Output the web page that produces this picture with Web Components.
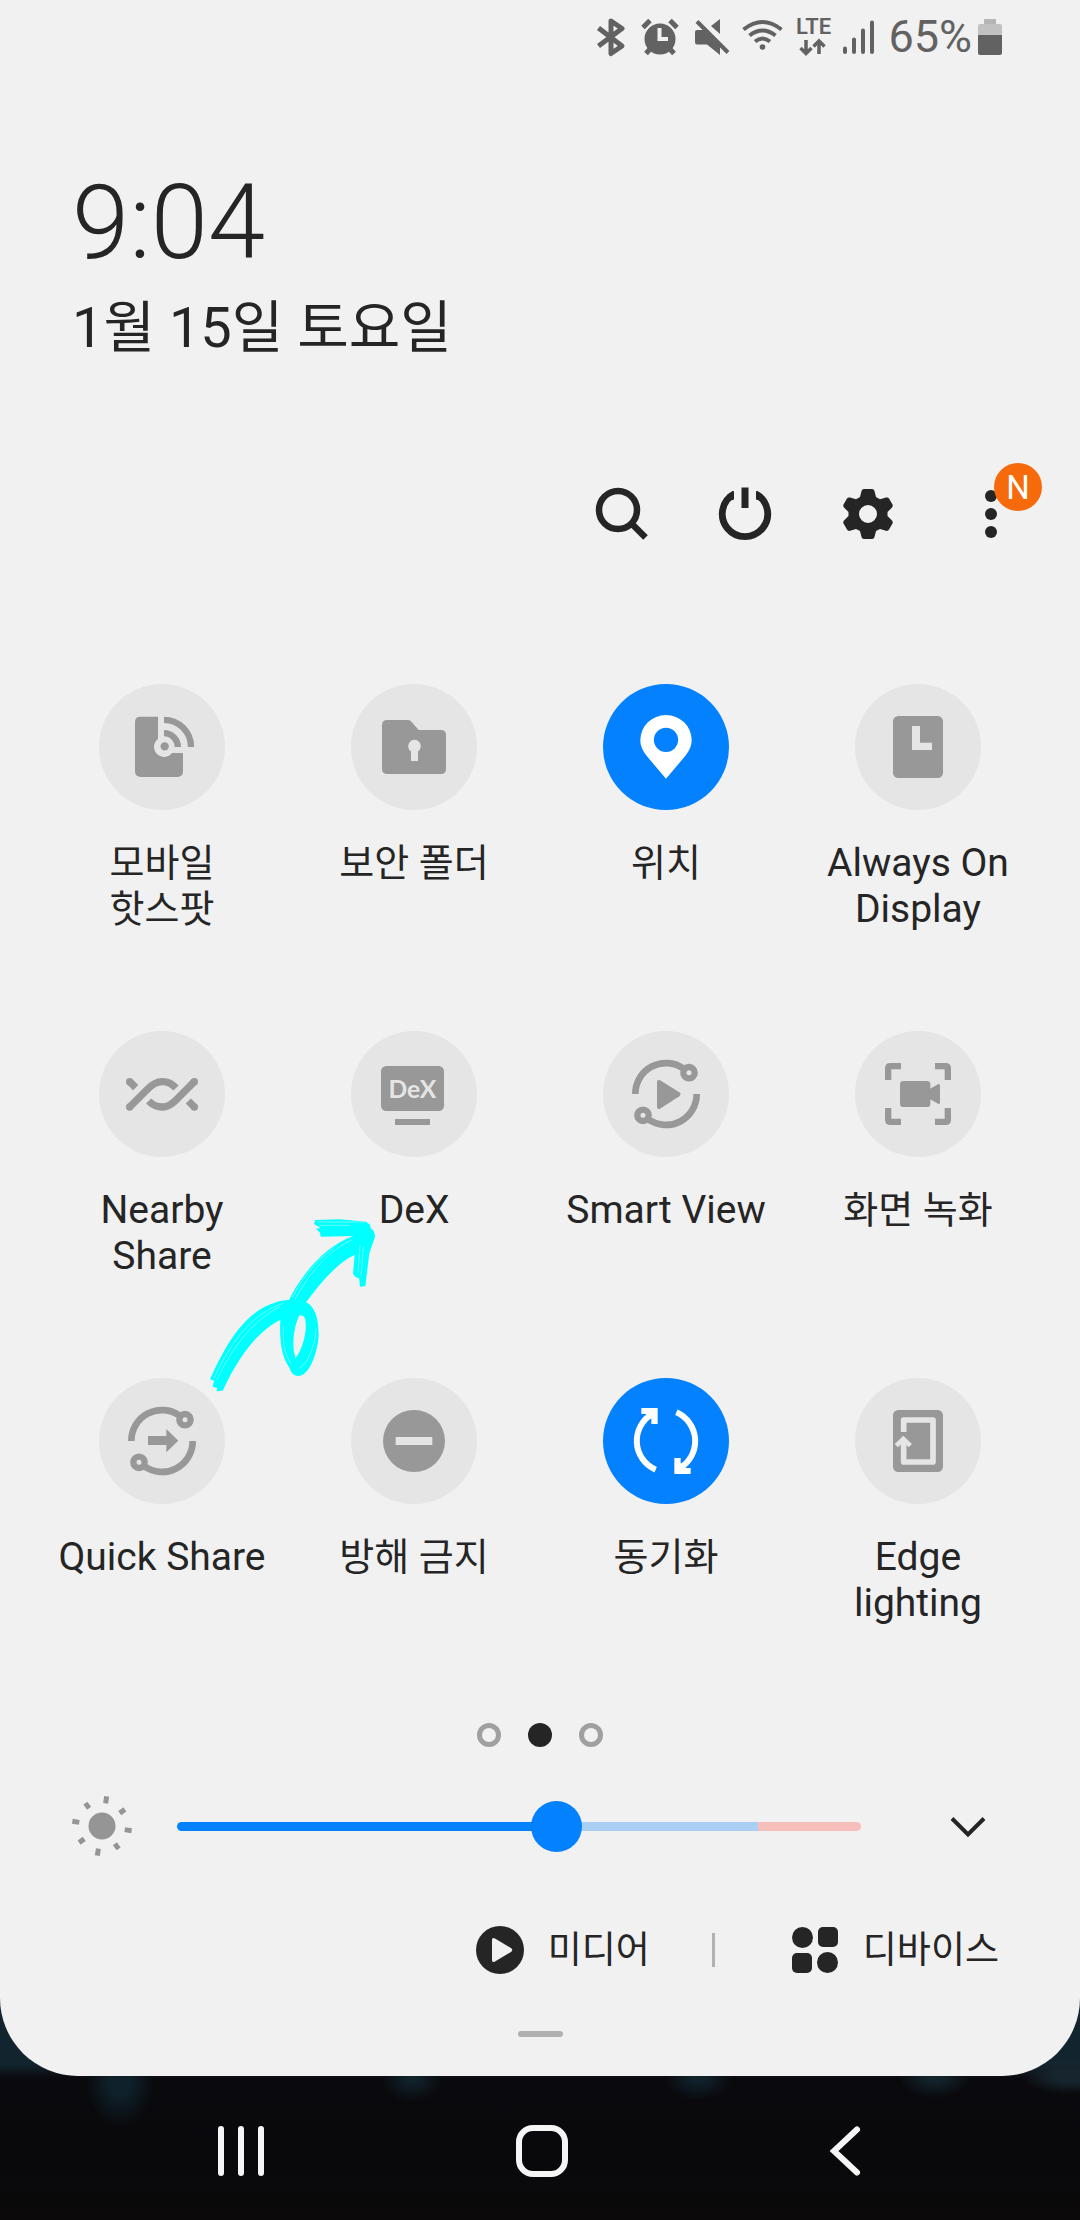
<!DOCTYPE html>
<html lang="ko">
<head>
<meta charset="utf-8">
<meta name="viewport" content="width=device-width, initial-scale=1">
<title>Quick settings</title>
<style>
  body { margin: 0; background: #0a0a0e; color: #252525; font-family: Roboto, "Noto Sans CJK KR", sans-serif; }
</style>
</head>
<body>
<quick-panel>
  <status-bar slot="status"></status-bar>
  <panel-clock slot="clock" time="9:04">1월 15일 토요일</panel-clock>
  <panel-toolbar slot="toolbar"></panel-toolbar>
  <tile-grid slot="tiles">
    <quick-tile icon="hotspot">모바일 핫스팟</quick-tile>
    <quick-tile icon="folder">보안 폴더</quick-tile>
    <quick-tile icon="pin" active>위치</quick-tile>
    <quick-tile icon="aod" lang="en">Always On Display</quick-tile>
    <quick-tile icon="nearby" lang="en">Nearby Share</quick-tile>
    <quick-tile icon="dex" lang="en">DeX</quick-tile>
    <quick-tile icon="smartview" lang="en">Smart View</quick-tile>
    <quick-tile icon="record">화면 녹화</quick-tile>
    <quick-tile icon="quickshare" lang="en">Quick Share</quick-tile>
    <quick-tile icon="dnd">방해 금지</quick-tile>
    <quick-tile icon="sync" active>동기화</quick-tile>
    <quick-tile icon="edge" lang="en">Edge lighting</quick-tile>
  </tile-grid>
  <page-dots slot="dots"></page-dots>
  <brightness-row slot="brightness"></brightness-row>
  <media-row slot="media"></media-row>
  <nav-bar slot="nav"></nav-bar>
</quick-panel>

<script>
// Each entry: [width, height, viewBox, content]. Shapes use currentColor; --cut is the colour of cut-outs.
const ring = '<g fill="none" stroke="currentColor"><path stroke-width="20" d="M97 189A92 92 0 0 1 242 113M281 189A92 92 0 0 1 136 265"/><circle cx="258" cy="125" r="17" stroke-width="19"/><circle cx="120" cy="253" r="17" stroke-width="19"/></g>';
const syncHalf = '<path fill="none" stroke="currentColor" stroke-width="18" d="M158 275A94 94 0 0 1 149 107"/><path fill="currentColor" d="M115 90H164V138H145V122L132 116L130 108H115Z"/>';
const tile = body => [126, 126, '0 0 378 378', body];
const ICONS = {
  bluetooth: [32, 38, '0 0 32 38', '<path fill="none" stroke="currentColor" stroke-width="5" stroke-linejoin="round" d="M1.500 10L25 28L14 35.500V3L25 10.500L1.500 28"/>'],
  alarm: [41, 38, '0 0 41 38', '<circle cx="19" cy="21" r="15.500" fill="currentColor"/><path stroke="currentColor" stroke-width="5" d="M2 9.500L9 2.500M29 2.500L36 9.500M10 30L5 35.500M28 30L33 35.500"/><path stroke="#f1f1f1" stroke-width="4" fill="none" d="M18.500 10V21H27"/>'],
  mute: [36, 38, '0 0 36 38', '<path fill="currentColor" d="M3 12H10L26 28V37L13 26.500H3Q1 26.500 1 24V14Q1 12 3 12ZM17 8L26 1V16Z"/><path stroke="currentColor" stroke-width="4" d="M3 3.500L34 34.500"/>'],
  wifi: [42, 38, '0 0 42 38', '<g fill="none" stroke="currentColor" stroke-width="4"><path d="M1.500 11.500Q20.500-3.500 39.500 11.500M7.500 17.500Q20.500 7.500 33.500 17.500M13 23.500Q20.500 17.500 28 23.500"/></g><circle cx="20.500" cy="29" r="2.800" fill="currentColor"/>'],
  lte: [34, 40, '0 0 34 40', '<text x="0" y="17" font-family="Roboto, sans-serif" font-weight="600" font-size="22" fill="currentColor">LTE</text><path fill="none" stroke="currentColor" stroke-width="3.500" d="M10 23V36M4.500 31L10 36.500L15.500 31M23 37V25M17.500 29.500L23 24L28.500 29.500"/>'],
  signal: [34, 38, '0 0 34 38', '<path stroke="currentColor" stroke-width="4" stroke-linecap="round" d="M3 30.500V34M12 21.500V34M21 12.500V34M30 4.500V34"/>'],
  battery: [24, 38, '0 0 24 38', '<path fill="#b5b5b5" d="M6 2Q6 1 7 1H17Q18 1 18 2V6H6Z"/><path fill="#c1c1c1" d="M2 6H22Q24 6 24 8V17H0V8Q0 6 2 6Z"/><path fill="currentColor" d="M0 17H24V35Q24 37 22 37H2Q0 37 0 35Z"/>'],
  search: [60, 60, '0 0 60 60', '<g fill="none" stroke="currentColor" stroke-width="6.500"><circle cx="26" cy="26" r="19"/><path d="M39 39L53.500 53.500"/></g>'],
  power: [60, 60, '0 0 60 60', '<path fill="none" stroke="currentColor" stroke-width="6.800" d="M19.500 9.800A22.700 22.700 0 1 0 40.500 9.800"/><path fill="#f1f1f1" d="M19 3H41V14H19Z"/><path fill="currentColor" d="M26.500 3.500H33.500V24H26.500ZM19 7V15.500L14 17L12 11ZM41 7V15.500L46 17L48 11Z"/>'],
  gear: [60, 60, '0 0 60 60', '<path fill="currentColor" fill-rule="evenodd" d="M26 5H34Q36 5 36.500 7L38 13L42 15.200L48 13.500Q50 13 51 14.500L54.500 20.500Q55.200 22 54 23.500L49.500 28V32L54 36.500Q55.200 38 54.500 39.500L51 45.500Q50 47.200 48 46.800L42 45L38 47L36.500 53Q36 55 34 55H26Q24 55 23.500 53L22 47L18 45L12 46.800Q10 47.200 9 45.500L5.500 39.500Q4.800 38 6 36.500L10.500 32V28L6 23.500Q4.800 22 5.500 20.500L9 14.500Q10 13 12 13.500L18 15.200L22 13L23.500 7Q24 5 26 5ZM30 21A9 9 0 1 0 30 39A9 9 0 1 0 30 21Z"/>'],
  more: [60, 60, '0 0 60 60', '<g fill="currentColor"><circle cx="30" cy="12" r="6"/><circle cx="30" cy="30" r="6"/><circle cx="30" cy="48" r="6"/></g>'],
  hotspot: tile('<path fill="currentColor" d="M124 98H177V165A30 30 0 1 0 219 207H252V262Q252 279 235 279H126Q108 279 108 262V114Q108 98 124 98Z"/><circle cx="197" cy="187" r="12.500" fill="currentColor"/><path fill="none" stroke="currentColor" stroke-width="19" d="M195 147.500A41.500 41.500 0 0 1 236.500 189M195 107.500A81 81 0 0 1 276 189"/>'),
  folder: tile('<path fill="currentColor" d="M109 108H170Q176 108 180 112L203 138H270Q285 138 285 153V254Q285 270 270 270H109Q93 270 93 254V124Q93 108 109 108Z"/><path fill="var(--cut)" d="M180 202A19 19 0 1 1 201 202V231H180Z"/>'),
  pin: tile('<path fill="currentColor" fill-rule="evenodd" d="M189 284L132 217C119 200 112 186 112 168A77 75 0 0 1 266 168C266 186 259 200 246 217ZM189 131A36 36 0 1 0 189 204A36 36 0 1 0 189 131Z"/>'),
  aod: tile('<rect x="114" y="96" width="150" height="186" rx="16" fill="currentColor"/><path fill="var(--cut)" d="M171 126H195V176H231V198H171Z"/>'),
  nearby: tile('<g fill="none" stroke="currentColor" stroke-width="22"><path d="M92 228L143 177Q166 152 190 152Q213 152 231 171M286 152L235 203Q212 228 190 228Q167 228 149 210M92 152L110 170M286 228L268 210"/></g><g fill="currentColor"><circle cx="92" cy="152" r="11"/><circle cx="92" cy="228" r="11"/><circle cx="286" cy="152" r="11"/><circle cx="286" cy="228" r="11"/></g>'),
  dex: tile('<rect x="90" y="105" width="189" height="135" rx="16" fill="currentColor"/><path fill="currentColor" d="M132 264H237V282H132Z"/><text x="184" y="201" text-anchor="middle" font-family="Lato, sans-serif" font-weight="700" font-size="74" fill="var(--cut)">DeX</text>'),
  smartview: tile(ring + '<path fill="currentColor" d="M162 154Q162 144 171 148L229 184Q236 190 229 196L171 233Q162 237 162 227Z"/>'),
  record: tile('<path fill="none" stroke="currentColor" stroke-width="19" d="M138 105.500H106Q99.500 105.500 99.500 112V147M240 105.500H272Q278.500 105.500 278.500 112V147M138 272.500H106Q99.500 272.500 99.500 266V231M240 272.500H272Q278.500 272.500 278.500 266V231"/><rect x="135" y="150" width="91" height="78" rx="10" fill="currentColor"/><path fill="currentColor" d="M224 174L249 160Q255 157 255 164V214Q255 221 249 218L224 204Z"/>'),
  quickshare: tile(ring + '<path fill="currentColor" d="M147 174H202V153L238 188L202 223V201H147Z"/>'),
  dnd: tile('<circle cx="189" cy="189" r="93" fill="currentColor"/><path fill="var(--cut)" d="M134 177H244V201H134Z"/>'),
  sync: tile(`<g>${syncHalf}</g><g transform="rotate(180 189 189)">${syncHalf}</g>`),
  edge: tile('<rect x="114" y="96" width="150" height="186" rx="16" fill="currentColor"/><g fill="none" stroke="var(--cut)"><path stroke-width="17" stroke-linejoin="round" d="M146 162V126H234V252H146V188"/><path stroke-width="14" d="M124 203L145 183L166 203"/></g>'),
  sun: [60, 60, '0 0 60 60', '<circle cx="30" cy="30" r="13.500" fill="currentColor"/><g stroke="currentColor" stroke-width="5" transform="rotate(9 30 30)"><path d="M30 0V7M30 53V60M0 30H7M53 30H60M10 10L14.500 14.500M45.500 45.500L50 50M50 10L45.500 14.500M14.500 45.500L10 50"/></g>'],
  chevron: [40, 40, '0 0 40 40', '<path fill="none" stroke="currentColor" stroke-width="4" d="M4 12.500L20 28.500L36 12.500"/>'],
  play: [48, 48, '0 0 48 48', '<circle cx="24" cy="24" r="24" fill="currentColor"/><path fill="#f1f1f1" d="M16 14Q16 11 19 12.500L35 22Q37.500 24 35 26L19 35.500Q16 37 16 34Z"/>'],
  devices: [48, 48, '0 0 48 48', '<g fill="currentColor"><circle cx="11.500" cy="11.500" r="10.500"/><rect x="27" y="1" width="20" height="20" rx="5"/><rect x="1" y="27" width="20" height="20" rx="5"/><circle cx="36.500" cy="36.500" r="10.500"/></g>'],
  recents: [60, 60, '0 0 60 60', '<path stroke="currentColor" stroke-width="6" stroke-linecap="round" d="M10 8V52M30 8V52M50 8V52"/>'],
  home: [60, 60, '0 0 60 60', '<rect x="7" y="7" width="46" height="46" rx="14" fill="none" stroke="currentColor" stroke-width="6"/>'],
  back: [60, 60, '0 0 60 60', '<path fill="none" stroke="currentColor" stroke-width="6" stroke-linecap="round" stroke-linejoin="miter" d="M44 8.500L21 30L44 51.500"/>']
};

const define = (name, css, html) => customElements.define(name, class extends HTMLElement {
  constructor() {
    super();
    this.attachShadow({ mode: 'open' });
  }
  connectedCallback() {
    const markup = typeof html === 'function' ? html(this) : html;
    this.shadowRoot.innerHTML = `<style>*{box-sizing:border-box}button{font:inherit;color:inherit;background:none;border:0;padding:0;margin:0}${css}</style>${markup}`;
  }
});

define('qs-icon', ':host{display:inline-block;flex:none}svg{display:block;overflow:visible}', el => {
  const [w, h, box, body] = ICONS[el.getAttribute('name')];
  return `<svg width="${w}" height="${h}" viewBox="${box}" aria-hidden="true">${body}</svg>`;
});

define('status-bar', `
  :host{display:flex;justify-content:flex-end;align-items:center;gap:12px;height:73px;padding:0 78px;color:#626262}
  .level{display:flex;align-items:center;gap:6px;font-size:45px;line-height:54px}`,
  `<qs-icon name="bluetooth"></qs-icon><qs-icon name="alarm"></qs-icon><qs-icon name="mute"></qs-icon>
   <qs-icon name="wifi"></qs-icon><qs-icon name="lte"></qs-icon><qs-icon name="signal"></qs-icon>
   <div class="level"><span>65%</span><qs-icon name="battery"></qs-icon></div>`);

define('panel-clock', `
  :host{display:block;padding:90px 72px 0}
  .time{font-size:103px;line-height:120px;font-weight:300}
  .date{margin-top:11px;font-size:56px;line-height:68px}`,
  el => `<div class="time">${el.getAttribute('time')}</div><div class="date"><slot></slot></div>`);

define('panel-toolbar', `
  :host{display:flex;justify-content:flex-end;padding:104px 28px 0}
  button{position:relative;width:123px;height:96px;display:flex;align-items:center;justify-content:center}
  .badge{position:absolute;top:-3px;left:65px;width:48px;height:48px;border-radius:50%;background:#f76a0c;color:#fff;font-size:33px;line-height:49px;text-align:center}`,
  `<button aria-label="검색"><qs-icon name="search"></qs-icon></button>
   <button aria-label="전원"><qs-icon name="power"></qs-icon></button>
   <button aria-label="설정"><qs-icon name="gear"></qs-icon></button>
   <button aria-label="더보기"><qs-icon name="more"></qs-icon><span class="badge">N</span></button>`);

define('tile-grid', `
  :host{position:relative;display:grid;grid-template-columns:repeat(4,1fr);row-gap:99px;padding:122px 36px 0 36px}
  .doodle{position:absolute;left:210px;top:656px;overflow:visible;pointer-events:none}`,
  `<slot></slot>
   <svg class="doodle" width="165" height="174" viewBox="480 624 495 522" aria-hidden="true">
     <g fill="#00ffff">
       <path d="M480 1108C525 1010 580 905 680 876C710 867 760 868 780 884C800 905 806 935 806 980C800 1040 775 1098 744 1098C728 1097 722 1085 719 1074C694 1040 688 990 691 930C640 955 580 1010 518 1142L500 1144L502 1134L488 1130L492 1112ZM748 916C734 945 728 985 731 1020L736 1045C755 1025 770 970 767 940C767 925 763 915 748 916Z" fill-rule="evenodd"/>
       <path d="M714 876C750 800 820 710 910 678L812 680L810 668L798 656L812 654L792 642L796 630L868 628L948 635L960 644L962 654Q974 662 975 680L958 730L946 828L930 830L928 806L916 800L909 792L914 734C860 760 810 820 766 880Z"/>
     </g>
     <g fill="none" stroke="#c9fbfb" stroke-width="1.500">
       <path d="M492 1104C540 1005 596 915 700 880M500 1110C548 1010 610 930 690 890M486 1120L494 1112M735 868C775 795 830 725 905 690M727 862C760 800 800 750 850 715"/>
       <path d="M800 636H944M808 646H900M798 955C796 1000 778 1055 750 1074M700 950C698 1000 704 1030 722 1060M930 705L924 790M940 710L933 800"/>
     </g>
   </svg>`);

define('quick-tile', `
  :host{display:block;--cut:#e5e5e5;--label:38px;color:#989898}
  :host([active]){--cut:#0381fe;color:#fff}
  :host([lang="en"]){--label:39px}
  button{display:flex;flex-direction:column;align-items:center;width:100%;gap:30px}
  .disc{width:126px;height:126px;border-radius:50%;background:var(--cut)}
  .label{width:212px;min-height:92px;font-size:var(--label);line-height:46px;color:#252525;text-align:center;word-break:keep-all}`,
  el => `<button aria-pressed="${el.hasAttribute('active')}"><qs-icon class="disc" name="${el.getAttribute('icon')}"></qs-icon><span class="label"><slot></slot></span></button>`);

define('page-dots', `
  :host{display:flex;justify-content:center;gap:27px;padding:97px 0 0}
  i{width:24px;height:24px;border-radius:50%;border:5px solid #a0a0a0}
  .on{border:0;background:#252525}`,
  '<i></i><i class="on"></i><i></i>');

define('brightness-row', `
  :host{display:flex;align-items:center;padding:49px 83px 0 72px;color:#959595}
  input{flex:1;min-width:0;height:60px;margin:0 78px 0 45px;background:none;-webkit-appearance:none;appearance:none}
  input::-webkit-slider-runnable-track{height:9px;border-radius:5px;background:linear-gradient(to right,#0381fe 56%,#a9cff5 56% 85%,#f6bfbb 85%)}
  input::-webkit-slider-thumb{-webkit-appearance:none;width:51px;height:51px;margin-top:-21px;border-radius:50%;background:#0381fe}
  button{width:58px;height:60px;display:flex;align-items:center;justify-content:center;color:#252525}`,
  `<qs-icon name="sun"></qs-icon><input type="range" min="0" max="100" value="56" aria-label="밝기">
   <button aria-label="펼치기"><qs-icon name="chevron"></qs-icon></button>`);

define('media-row', `
  :host{display:flex;justify-content:flex-end;align-items:center;padding:64px 81px 0}
  button{display:flex;align-items:center;gap:24px;height:60px;font-size:37px;line-height:46px}
  span{padding-top:2px}
  hr{width:3px;height:34px;margin:0 76px 0 62px;border:0;background:#b2b2b2}`,
  `<button><qs-icon name="play"></qs-icon><span>미디어</span></button><hr>
   <button><qs-icon name="devices"></qs-icon><span>디바이스</span></button>`);

define('nav-bar', `
  :host{display:flex;padding:0 87px 0 91px;color:#f5f5f5}
  button{flex:1;height:144px;display:flex;align-items:center;justify-content:center;padding-top:6px}`,
  `<button aria-label="최근 앱"><qs-icon name="recents"></qs-icon></button>
   <button aria-label="홈"><qs-icon name="home"></qs-icon></button>
   <button aria-label="뒤로"><qs-icon name="back"></qs-icon></button>`);

define('quick-panel', `
  :host{display:flex;flex-direction:column;min-height:100vh;
    background:
      radial-gradient(ellipse 34px 46px at 120px calc(100% - 140px),#0f222b 30%,transparent),
      radial-gradient(ellipse 30px 26px at 412px calc(100% - 144px),#10222b 20%,transparent),
      radial-gradient(ellipse 34px 24px at 698px calc(100% - 144px),#10222b 20%,transparent),
      radial-gradient(ellipse 36px 22px at 935px calc(100% - 144px),#13242d 20%,transparent),
      radial-gradient(ellipse 50px 18px at 1070px calc(100% - 144px),#17262e 30%,transparent),
      linear-gradient(to bottom,#12252e calc(100% - 156px),#0a0a0e calc(100% - 142px),#09090c calc(100% - 60px),#0b0909)}
  main{flex:1;padding-bottom:39px;border-radius:0 0 78px 78px;background:#f1f1f1}
  .handle{width:45px;height:6px;margin:51px auto 0;border-radius:3px;background:#b0b0b0}`,
  `<main><slot name="status"></slot><slot name="clock"></slot><slot name="toolbar"></slot><slot name="tiles"></slot>
   <slot name="dots"></slot><slot name="brightness"></slot><slot name="media"></slot><div class="handle"></div></main>
   <slot name="nav"></slot>`);
</script>
</body>
</html>
